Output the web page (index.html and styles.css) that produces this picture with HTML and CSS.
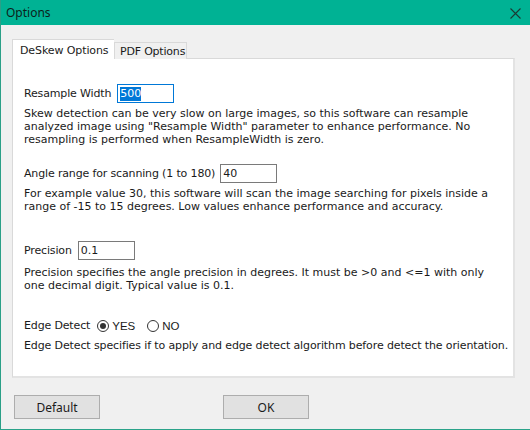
FILE: index.html
```html
<!DOCTYPE html>
<html>
<head>
<meta charset="utf-8">
<link rel="stylesheet" href="styles.css">
</head>
<body>
<div class="window">
  <div class="titlebar">
    <span class="title">Options</span>
    <svg class="close" width="11" height="11" viewBox="0 0 11 11"><path d="M0.5 0.5 L10.5 10.5 M10.5 0.5 L0.5 10.5" stroke="#1b3b34" stroke-width="1.1" fill="none"/></svg>
  </div>
  <div class="client">
    <div class="tabs">
      <div class="tab active">DeSkew Options</div>
      <div class="tab">PDF Options</div>
    </div>
    <div class="panel">
      <div class="row r1">
        <span class="label">Resample Width</span>
        <div class="edit focus w57"><span class="sel">500</span></div>
      </div>
      <p class="desc">Skew detection can be very slow on large images, so this software can resample analyzed image using "Resample Width" parameter to enhance performance. No resampling is performed when ResampleWidth is zero.</p>

      <div class="row r2">
        <span class="label">Angle range for scanning (1 to 180)</span>
        <div class="edit w57">40</div>
      </div>
      <p class="desc">For example value 30, this software will scan the image searching for pixels inside a range of -15 to 15 degrees. Low values enhance performance and accuracy.</p>

      <div class="row r3">
        <span class="label">Precision</span>
        <div class="edit w57">0.1</div>
      </div>
      <p class="desc d3">Precision specifies the angle precision in degrees. It must be &gt;0 and &lt;=1 with only<br>one decimal digit. Typical value is 0.1.</p>

      <div class="row r4">
        <span class="label">Edge Detect</span>
        <span class="radio checked"></span><span class="rlabel">YES</span>
        <span class="radio"></span><span class="rlabel">NO</span>
      </div>
      <p class="desc d4">Edge Detect specifies if to apply and edge detect algorithm before detect the orientation.</p>
    </div>
    <div class="buttons">
      <div class="btn">Default</div>
      <div class="btn ok">OK</div>
    </div>
  </div>
</div>
</body>
</html>
```
FILE: styles.css
```css
html, body {
  margin: 0;
  padding: 0;
  background: #f0f0f0;
}
.window {
  width: 529px;
  height: 429px;
  border-left: 1px solid #2a9f87;
  border-bottom: 1px solid #2aa38a;
  background: #f0f0f0;
  position: relative;
  font-family: "DejaVu Sans", Verdana, sans-serif;
  font-size: 11px;
  color: #1a1a1a;
}
.titlebar {
  height: 25px;
  background: #00b294;
  display: flex;
  align-items: center;
  justify-content: space-between;
  padding: 0 9px 0 5px;
}
.title {
  font-family: "Noto Sans", "Liberation Sans", sans-serif;
  font-size: 12px;
  color: #0c1f1b;
}
.close {
  display: block;
  margin-top: 1px;
}
.client {
  padding: 14px 0 0 11px;
}
.tabs {
  display: flex;
  align-items: flex-end;
  height: 20px;
  position: relative;
  z-index: 1;
}
.tab {
  height: 17px;
  box-sizing: border-box;
  border: 1px solid #d9d9d9;
  border-bottom: none;
  background: #f0f0f0;
  padding: 2px 0 0 5px;
  line-height: 13px;
  color: #1a1a1a;
  width: 73px;
  white-space: nowrap;
  overflow: hidden;
  letter-spacing: -0.2px;
}
.tab.active {
  height: 20px;
  width: 102px;
  background: #ffffff;
  padding: 4px 0 0 7px;
  border-right: none;
  letter-spacing: -0.1px;
}
.panel {
  width: 503px;
  height: 320px;
  box-sizing: border-box;
  margin-top: -1px;
  background: #ffffff;
  border: 1px solid #d9d9d9;
  border-right: 2px solid #e3e3e3;
  border-bottom: 2px solid #e3e3e3;
  padding: 25px 0 0 11px;
}
.row {
  display: flex;
  align-items: center;
  height: 19px;
}
.label {
  margin-right: 6px;
  line-height: 13px;
  letter-spacing: -0.15px;
}
.edit {
  height: 19px;
  box-sizing: border-box;
  border: 1px solid #7a7a7a;
  background: #fff;
  padding: 2px 0 0 2px;
  line-height: 13px;
  font-size: 11px;
}
.edit.focus {
  border-color: #0078d7;
}
.w57 { width: 57px; }
.sel {
  background: #0078d7;
  color: #fff;
  display: inline-block;
  line-height: 14px;
}
.r1 .label { margin-right: 6px; }
.r2 { margin-top: 18px; }
.r2 .label { margin-right: 5px; }
.r3 { margin-top: 28px; }
.r3 .label { margin-right: 6px; }
.r4 { margin-top: 24px; }
.r4 .label { margin-right: 7px; }
.desc {
  margin: 4px 0 0 0;
  line-height: 13px;
  width: 486px;
}
.d3 { margin-top: 6px; }
.d4 {
  margin-top: 4px;
  white-space: nowrap;
  letter-spacing: -0.12px;
}
.radio {
  width: 12px;
  height: 12px;
  box-sizing: border-box;
  border: 1px solid #333;
  border-radius: 50%;
  position: relative;
  background: #fff;
}
.radio.checked::after {
  content: "";
  position: absolute;
  left: 2px;
  top: 2px;
  width: 6px;
  height: 6px;
  border-radius: 50%;
  background: #333;
}
.rlabel {
  font-family: "Liberation Sans", Arial, sans-serif;
  font-size: 11.5px;
  margin-left: 3px;
  margin-right: 12px;
}
.buttons {
  display: flex;
  margin-top: 17px;
  padding-left: 2px;
}
.btn {
  width: 86px;
  height: 24px;
  box-sizing: border-box;
  background: #e1e1e1;
  border: 1px solid #adadad;
  font-family: "Noto Sans", "Liberation Sans", sans-serif;
  font-size: 12px;
  display: flex;
  align-items: center;
  justify-content: center;
  color: #1a1a1a;
}
.btn.ok {
  margin-left: 123px;
}
```
